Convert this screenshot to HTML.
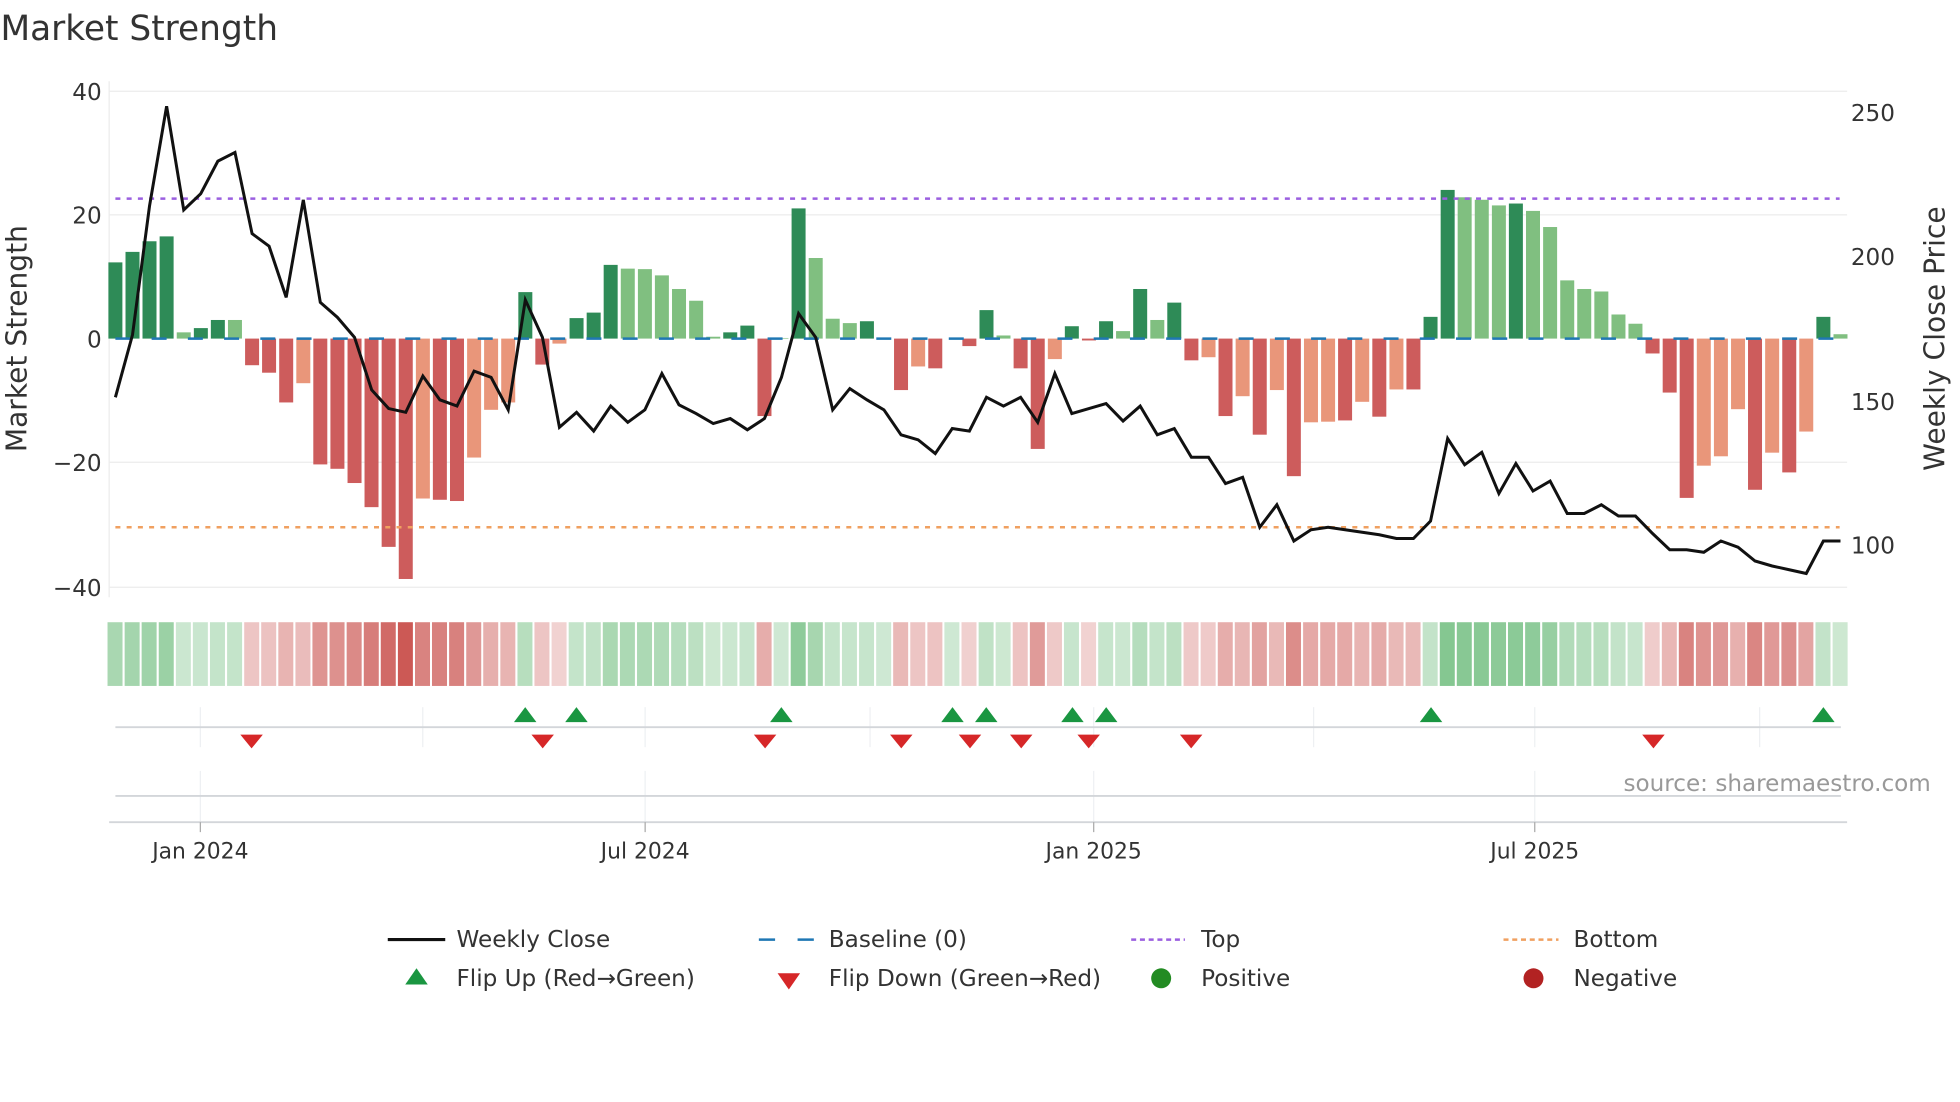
<!DOCTYPE html>
<html><head><meta charset="utf-8"><style>
html,body{margin:0;padding:0;background:#fff;}
svg{display:block;font-family:"DejaVu Sans","Liberation Sans",sans-serif;}
</style></head><body>
<svg id="s" width="1960" height="1102" viewBox="0 0 1568 882" xmlns="http://www.w3.org/2000/svg">
<rect width="1568" height="882" fill="#fff"/>
<text x="0" y="32" font-size="27.5" fill="#333">Market Strength</text>
<g stroke="#ececec" stroke-width="1">
<line x1="87" y1="73" x2="1478" y2="73"/><line x1="87" y1="172" x2="1478" y2="172"/>
<line x1="87" y1="370" x2="1478" y2="370"/><line x1="87" y1="470" x2="1478" y2="470"/>
<line x1="87" y1="65" x2="87" y2="478"/>
</g>
<g font-size="18.5" fill="#333" text-anchor="end">
<text x="81" y="80">40</text><text x="81" y="179">20</text><text x="81" y="278">0</text>
<text x="81" y="377">−20</text><text x="81" y="477">−40</text>
</g>
<g font-size="18.5" fill="#333">
<text x="1481" y="97">250</text><text x="1481" y="212">200</text><text x="1481" y="328">150</text><text x="1481" y="443">100</text>
</g>
<text transform="translate(21,271) rotate(-90)" font-size="22.5" fill="#333" text-anchor="middle">Market Strength</text>
<text transform="translate(1556,271) rotate(-90)" font-size="22.5" fill="#333" text-anchor="middle">Weekly Close Price</text>
<g id="bars"></g>
<line x1="92" y1="271" x2="1473" y2="271" stroke="#1f77b4" stroke-width="2" stroke-dasharray="12 17"/>
<line x1="92" y1="159" x2="1472" y2="159" stroke="#9b5fe0" stroke-width="2" stroke-dasharray="4 5"/>
<line x1="92" y1="422" x2="1472" y2="422" stroke="#f0a060" stroke-width="2" stroke-dasharray="4 5"/>
<polyline id="pl" fill="none" stroke="#111" stroke-width="2.4" stroke-linejoin="miter"/>
<g id="strip"></g>
<g stroke="#eef0f3" stroke-width="1">
<line x1="160" y1="566" x2="160" y2="598"/><line x1="338" y1="566" x2="338" y2="598"/><line x1="516" y1="566" x2="516" y2="598"/><line x1="696" y1="566" x2="696" y2="598"/><line x1="875" y1="566" x2="875" y2="598"/><line x1="1051" y1="566" x2="1051" y2="598"/><line x1="1228" y1="566" x2="1228" y2="598"/><line x1="1408" y1="566" x2="1408" y2="598"/>
<line x1="160" y1="617" x2="160" y2="658"/><line x1="516" y1="617" x2="516" y2="658"/><line x1="875" y1="617" x2="875" y2="658"/><line x1="1228" y1="617" x2="1228" y2="658"/>
</g>
<line x1="92" y1="582" x2="1473" y2="582" stroke="#d3d6da" stroke-width="1.5"/>
<line x1="92" y1="637" x2="1473" y2="637" stroke="#d3d6da" stroke-width="1.5"/>
<line x1="87" y1="658" x2="1478" y2="658" stroke="#d3d6da" stroke-width="1.5"/>
<g stroke="#aaa" stroke-width="1"><line x1="160" y1="658" x2="160" y2="666"/><line x1="516" y1="658" x2="516" y2="666"/><line x1="875" y1="658" x2="875" y2="666"/><line x1="1228" y1="658" x2="1228" y2="666"/></g>
<g id="marks"></g>
<g font-size="17.5" fill="#333" text-anchor="middle">
<text x="160" y="687">Jan 2024</text><text x="516" y="687">Jul 2024</text><text x="875" y="687">Jan 2025</text><text x="1228" y="687">Jul 2025</text>
</g>
<text x="1545" y="633" font-size="18.5" fill="#999" text-anchor="end">source: sharemaestro.com</text>
<g font-size="18.5" fill="#333">
<line x1="310" y1="752" x2="356" y2="752" stroke="#111" stroke-width="2.5"/><text x="365" y="758">Weekly Close</text>
<line x1="607" y1="752" x2="651" y2="752" stroke="#1f77b4" stroke-width="2" stroke-dasharray="13 18"/><text x="663" y="758">Baseline (0)</text>
<line x1="905" y1="752" x2="948" y2="752" stroke="#9b5fe0" stroke-width="2" stroke-dasharray="4 3"/><text x="961" y="758">Top</text>
<line x1="1203" y1="752" x2="1247" y2="752" stroke="#f0a060" stroke-width="2" stroke-dasharray="4 3"/><text x="1259" y="758">Bottom</text>
<polygon points="324,788 342,788 333,775" fill="#1a9641"/><text x="365" y="789">Flip Up (Red→Green)</text>
<polygon points="622,779 640,779 631,792" fill="#d62728"/><text x="663" y="789">Flip Down (Green→Red)</text>
<circle cx="929" cy="783" r="8" fill="#228b22"/><text x="961" y="789">Positive</text>
<circle cx="1227" cy="783" r="8" fill="#b22222"/><text x="1259" y="789">Negative</text>
</g>
</svg>
<script>
var d="D12.3,D14,D15.7,D16.5,L1,D1.7,D3,L3,R-4.3,R-5.5,R-10.3,S-7.2,R-20.3,R-21,R-23.3,R-27.2,R-33.6,R-38.8,S-25.8,R-26,R-26.2,S-19.2,S-11.5,S-10.3,D7.5,R-4.2,S-0.8,D3.3,D4.2,D11.9,L11.3,L11.2,L10.2,L8,L6.1,L0.3,D1,D2.1,R-12.5,L0.1,D21,L13,L3.2,L2.5,D2.8,L0,R-8.3,S-4.5,R-4.8,L0,R-1.2,D4.6,L0.5,R-4.8,R-17.8,S-3.3,D2,R-0.3,D2.8,L1.2,D8,L3,D5.8,R-3.5,S-3,R-12.5,S-9.3,R-15.5,S-8.3,R-22.2,S-13.5,S-13.4,R-13.2,S-10.2,R-12.6,S-8.2,R-8.2,D3.5,D24,L22.8,L22.4,L21.5,D21.8,L20.6,L18,L9.4,L8,L7.6,L3.9,L2.4,R-2.4,R-8.7,R-25.7,S-20.5,S-19,S-11.4,R-24.4,S-18.4,R-21.6,S-15,D3.5,L0.7".split(",");
var ys=[318,268,165,85,168,155,129,122,187,197,238,160,242,254,270,312,327,330,301,320,325,297,302,328,240,270,342,330,345,325,338,328,299,324,331,339,335,344,335,302,251,270,328,311,320,328,348,352,363,343,345,318,325,318,338,299,331,327,323,337,325,348,343,366,366,387,382,422,404,433,424,422,424,426,428,431,431,417,351,372,362,395,371,393,385,411,411,404,413,413,427,440,440,442,433,438,449,453,456,459,433,433];
var C={D:"#2e8b57",L:"#80bf80",R:"#cd5c5c",S:"#e9967a"};
var b="",st="",pts=[];
for(var i=0;i<d.length;i++){var t=d[i][0],v=parseFloat(d[i].slice(1)),x=92+13.67*i;
var h=Math.abs(v)*4.96; if(h>0.3){var y=v>=0?271-h:271; b+='<rect x="'+(x-5.6).toFixed(1)+'" y="'+y.toFixed(1)+'" width="11.2" height="'+h.toFixed(1)+'" fill="'+C[t]+'"/>';}
var col,op;
if(v>=0){col="#5cb46c";op=0.3+0.45*Math.min(v/24,1);}else{col="#c9504c";op=0.25+0.7*Math.min(-v/39,1);}
st+='<rect x="'+(x-6.3).toFixed(1)+'" y="498" width="12" height="51" fill="'+col+'" fill-opacity="'+op.toFixed(2)+'"/>';
pts.push(x.toFixed(1)+","+ys[i]);}
document.getElementById("bars").innerHTML=b;
document.getElementById("strip").innerHTML=st;
document.getElementById("pl").setAttribute("points",pts.join(" "));
var up=[420,461,625,762,789,858,885,1145,1459],dn=[201,434,612,721,776,817,871,953,1323],m="";
up.forEach(function(x){m+='<polygon points="'+(x-9)+',578 '+(x+9)+',578 '+x+',566" fill="#1a9641"/>';});
dn.forEach(function(x){m+='<polygon points="'+(x-9)+',588 '+(x+9)+',588 '+x+',599" fill="#d62728"/>';});
document.getElementById("marks").innerHTML=m;
</script>
</body></html>
